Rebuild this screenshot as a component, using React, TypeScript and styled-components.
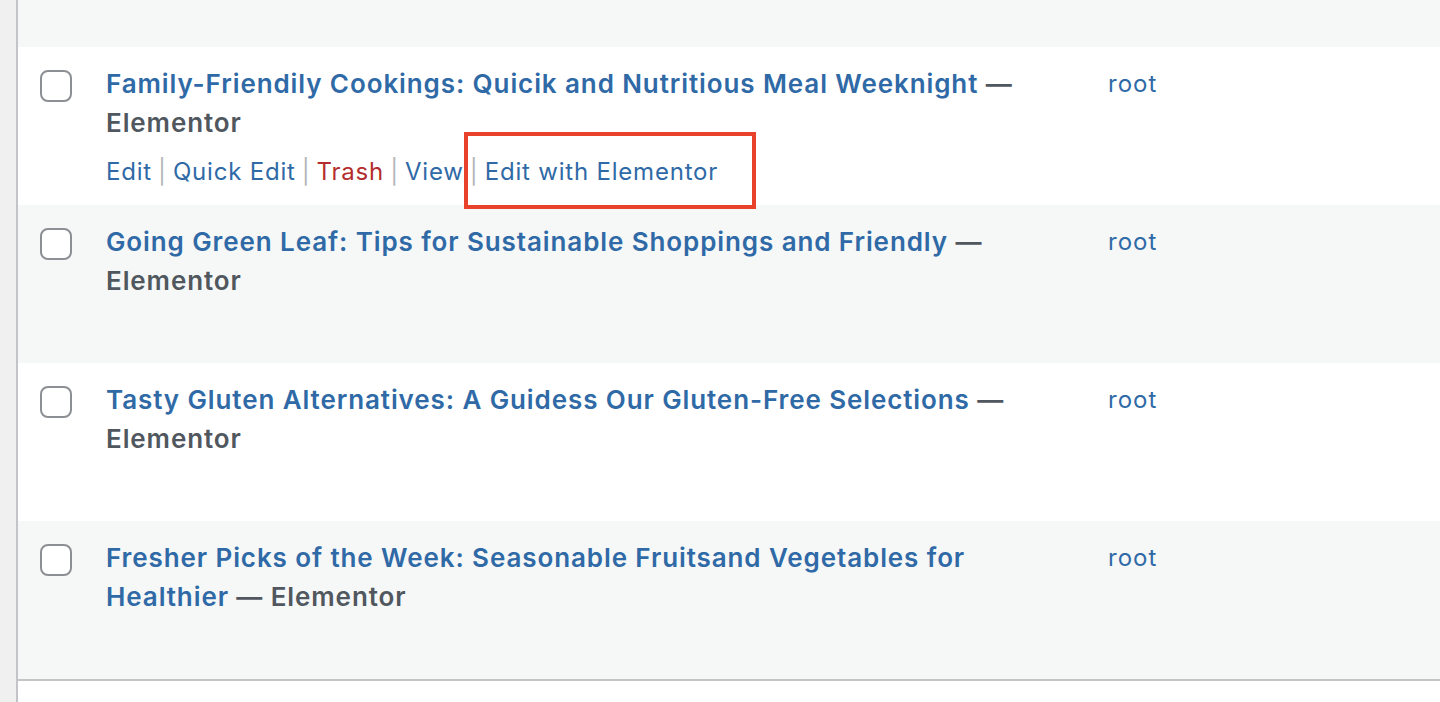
import styled, { createGlobalStyle } from "styled-components";

const GlobalStyle = createGlobalStyle`
  html, body {
    margin: 0;
    padding: 0;
    background: #ffffff;
  }
  body {
    font-family: Inter, "Noto Sans", "Liberation Sans", sans-serif;
    -webkit-font-smoothing: antialiased;
  }
`;

const Page = styled.div`
  display: flex;
  width: 1440px;
  height: 702px;
  overflow: hidden;
`;

const Gutter = styled.div`
  width: 16px;
  flex: none;
  background: #f0f0f1;
  border-right: 2px solid #c3c4c7;
`;

const Table = styled.div`
  flex: 1;
  display: flex;
  flex-direction: column;
`;

const TopStrip = styled.div`
  height: 47px;
  background: #f6f7f7;
`;

const Row = styled.div<{ striped: boolean }>`
  display: grid;
  grid-template-columns: 78px 1002px 1fr;
  height: 158px;
  box-sizing: border-box;
  padding-top: 17px;
  background: ${(p) => (p.striped ? "#f6f7f7" : "#ffffff")};
`;

const CheckCell = styled.div`
  padding-left: 22px;
  padding-top: 6px;
`;

const Check = styled.span`
  display: block;
  width: 32px;
  height: 32px;
  box-sizing: border-box;
  border: 2px solid #8c8f94;
  border-radius: 8px;
  background: #ffffff;
`;

const TitleCell = styled.div`
  padding: 0 10px;
`;

const Title = styled.div`
  font-size: 26px;
  line-height: 39px;
  font-weight: 600;
  letter-spacing: 0.9px;
  color: #50575e;
`;

const TitleLink = styled.a`
  color: #2f6aa7;
  text-decoration: none;
`;

const Actions = styled.div<{ shown: boolean }>`
  margin-top: 10px;
  font-size: 24px;
  line-height: 39px;
  letter-spacing: 0.8px;
  word-spacing: -1.5px;
  color: #b4b7ba;
  visibility: ${(p) => (p.shown ? "visible" : "hidden")};
  white-space: nowrap;
`;

const Action = styled.a<{ danger?: boolean }>`
  color: ${(p) => (p.danger ? "#b32d2e" : "#2f6aa7")};
  text-decoration: none;
  word-spacing: 0;
`;

const Highlight = styled.span`
  position: relative;

  &::after {
    content: "";
    position: absolute;
    left: 0;
    right: -38px;
    top: -25px;
    bottom: -23px;
    border: 4px solid #e8412c;
    pointer-events: none;
  }
`;

const AuthorCell = styled.div`
  padding: 0 10px;
  font-size: 24px;
  line-height: 39px;
  letter-spacing: 1px;
`;

const Author = styled.a`
  color: #2f6aa7;
  text-decoration: none;
`;

const BottomBorder = styled.div`
  border-top: 2px solid #c3c4c7;
  flex: 1;
  background: #ffffff;
`;

const posts = [
  "Family-Friendily Cookings: Quicik and Nutritious Meal Weeknight",
  "Going Green Leaf: Tips for Sustainable Shoppings and Friendly",
  "Tasty Gluten Alternatives: A Guidess Our Gluten-Free Selections",
  "Fresher Picks of the Week: Seasonable Fruitsand Vegetables for Healthier",
];

function App() {
  return (
    <>
      <GlobalStyle />
      <Page>
        <Gutter />
        <Table>
          <TopStrip />
          {posts.map((title, i) => (
            <Row key={title} striped={i % 2 === 1}>
              <CheckCell>
                <Check />
              </CheckCell>
              <TitleCell>
                <Title>
                  <TitleLink href="#">{title}</TitleLink> — Elementor
                </Title>
                <Actions shown={i === 0}>
                  <Action href="#">Edit</Action> | <Action href="#">Quick Edit</Action> |{" "}
                  <Action href="#" danger>
                    Trash
                  </Action>{" "}
                  | <Action href="#">View</Action>
                  <Highlight>
                    {" "}| <Action href="#">Edit with Elementor</Action>
                  </Highlight>
                </Actions>
              </TitleCell>
              <AuthorCell>
                <Author href="#">root</Author>
              </AuthorCell>
            </Row>
          ))}
          <BottomBorder />
        </Table>
      </Page>
    </>
  );
}

export default App;
